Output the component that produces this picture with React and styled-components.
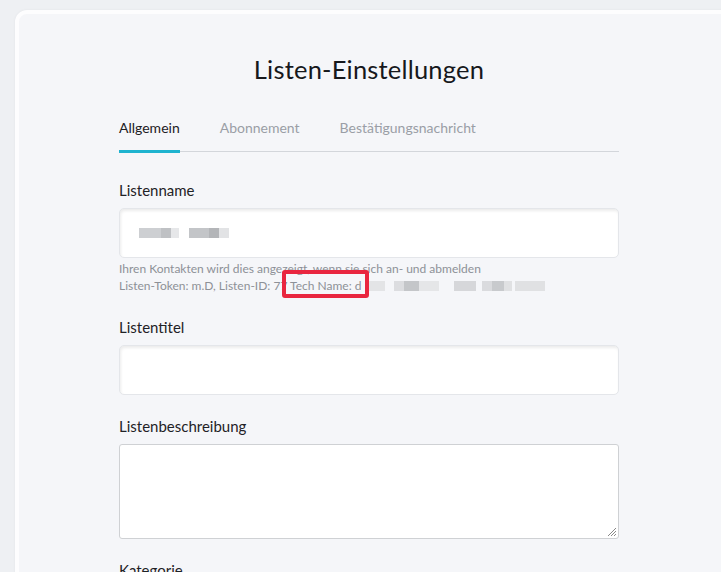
import styled, { createGlobalStyle } from "styled-components";

const GlobalStyle = createGlobalStyle`
    html, body {
        margin: 0;
        padding: 0;
        background: #eef0f3;
        font-family: Lato, "Open Sans", sans-serif;
        overflow: hidden;
    }
`;

const Page = styled.div`
    padding: 10px 0 0 15px;
    height: 572px;
    box-sizing: border-box;
`;

const Card = styled.section`
    width: 720px;
    min-height: 600px;
    background: #f5f6f9;
    border: 4px solid #fdfdfe;
    border-radius: 12px;
    box-shadow: 0 0 3px rgba(0, 0, 0, 0.05);
    box-sizing: border-box;
    padding: 40px 0 0 100px;
`;

const Content = styled.div`
    width: 500px;
`;

const Title = styled.h1`
    margin: 0 0 35px;
    text-align: center;
    font-size: 25.5px;
    font-weight: 400;
    color: #16181c;
    letter-spacing: 0.2px;
`;

const Tabs = styled.nav`
    display: flex;
    gap: 40px;
    border-bottom: 1px solid #d3d6db;
    margin-bottom: 29px;
`;

const Tab = styled.span`
    font-size: 14px;
    padding: 0 0 14px;
    color: ${(p) => (p.$active ? "#1d2024" : "#9a9ea6")};
    border-bottom: 3px solid ${(p) => (p.$active ? "#1fb3cf" : "transparent")};
    margin-bottom: -2px;
`;

const Field = styled.div`
    display: flex;
    flex-direction: column;
    margin-bottom: 22px;
`;

const Label = styled.label`
    font-size: 15px;
    color: #1f2226;
    margin-bottom: 9px;
`;

const Input = styled.div`
    height: 50px;
    background: #fff;
    border: 1px solid #e4e6ea;
    border-radius: 5px;
    box-shadow: inset 1px 2px 3px rgba(0, 0, 0, 0.08);
    box-sizing: border-box;
    display: flex;
    align-items: center;
    gap: 10px;
    padding-left: 19px;
`;

const Redacted = styled.span`
    display: inline-block;
    width: ${(p) => p.$w}px;
    height: 10px;
    background: ${(p) => p.$c || "#c9cbce"};
    vertical-align: middle;
`;

const Textarea = styled.div`
    position: relative;
    height: 95px;
    background: #fff;
    border: 1px solid #cfd1d4;
    border-radius: 3px;
    box-sizing: border-box;
`;

const Grip = styled.svg`
    position: absolute;
    right: 1px;
    bottom: 1px;
`;

const Help = styled.div`
    position: relative;
    font-size: 12px;
    line-height: 17px;
    color: #8d9197;
    margin: 2px 0 2px;
`;

const HelpLine = styled.div`
    display: flex;
    align-items: center;
    white-space: nowrap;
`;

const Highlight = styled.span`
    position: absolute;
    left: 163px;
    top: 10px;
    width: 79px;
    height: 20px;
    border: 4px solid #e9263f;
    border-radius: 3px;
`;

const Blur = styled.span`
    display: inline-flex;
    align-items: center;
`;

export default function App() {
    return (
        <Page>
            <GlobalStyle />
            <Card>
                <Content>
                    <Title>Listen-Einstellungen</Title>
                    <Tabs>
                        <Tab $active>Allgemein</Tab>
                        <Tab>Abonnement</Tab>
                        <Tab>Bestätigungsnachricht</Tab>
                    </Tabs>

                    <Field>
                        <Label>Listenname</Label>
                        <Input>
                            <Blur>
                                <Redacted $w={22} $c="#cdcfd2" />
                                <Redacted $w={10} $c="#bfc1c4" />
                                <Redacted $w={8} $c="#e6e7e9" />
                            </Blur>
                            <Blur>
                                <Redacted $w={20} $c="#c3c5c8" />
                                <Redacted $w={10} $c="#b3b5b8" />
                                <Redacted $w={10} $c="#e2e3e5" />
                            </Blur>
                        </Input>
                        <Help>
                            <HelpLine>Ihren Kontakten wird dies angezeigt, wenn sie sich an- und abmelden</HelpLine>
                            <HelpLine>
                                Listen-Token: m.D, Listen-ID: 77 Tech Name: d&nbsp;
                                <Redacted $w={20} $c="#e3e4e6" />
                                &nbsp;&nbsp;&nbsp;
                                <Blur>
                                    <Redacted $w={10} $c="#dcdde0" />
                                    <Redacted $w={15} $c="#c4c6c9" />
                                    <Redacted $w={20} $c="#e5e6e8" />
                                </Blur>
                                &nbsp;&nbsp;&nbsp;&nbsp;&nbsp;
                                <Redacted $w={22} $c="#d6d7da" />
                                &nbsp;&nbsp;
                                <Blur>
                                    <Redacted $w={10} $c="#dadbde" />
                                    <Redacted $w={12} $c="#c8cacd" />
                                    <Redacted $w={8} $c="#e0e1e3" />
                                </Blur>
                                &nbsp;
                                <Redacted $w={30} $c="#e0e1e3" />
                            </HelpLine>
                            <Highlight />
                        </Help>
                    </Field>

                    <Field>
                        <Label>Listentitel</Label>
                        <Input />
                    </Field>

                    <Field>
                        <Label>Listenbeschreibung</Label>
                        <Textarea>
                            <Grip width="12" height="12" viewBox="0 0 12 12">
                                <path d="M11 3 L3 11 M11 6 L6 11 M11 9 L9 11" stroke="#888" strokeWidth="1" />
                            </Grip>
                        </Textarea>
                    </Field>

                    <Field>
                        <Label>Kategorie</Label>
                    </Field>
                </Content>
            </Card>
        </Page>
    );
}
